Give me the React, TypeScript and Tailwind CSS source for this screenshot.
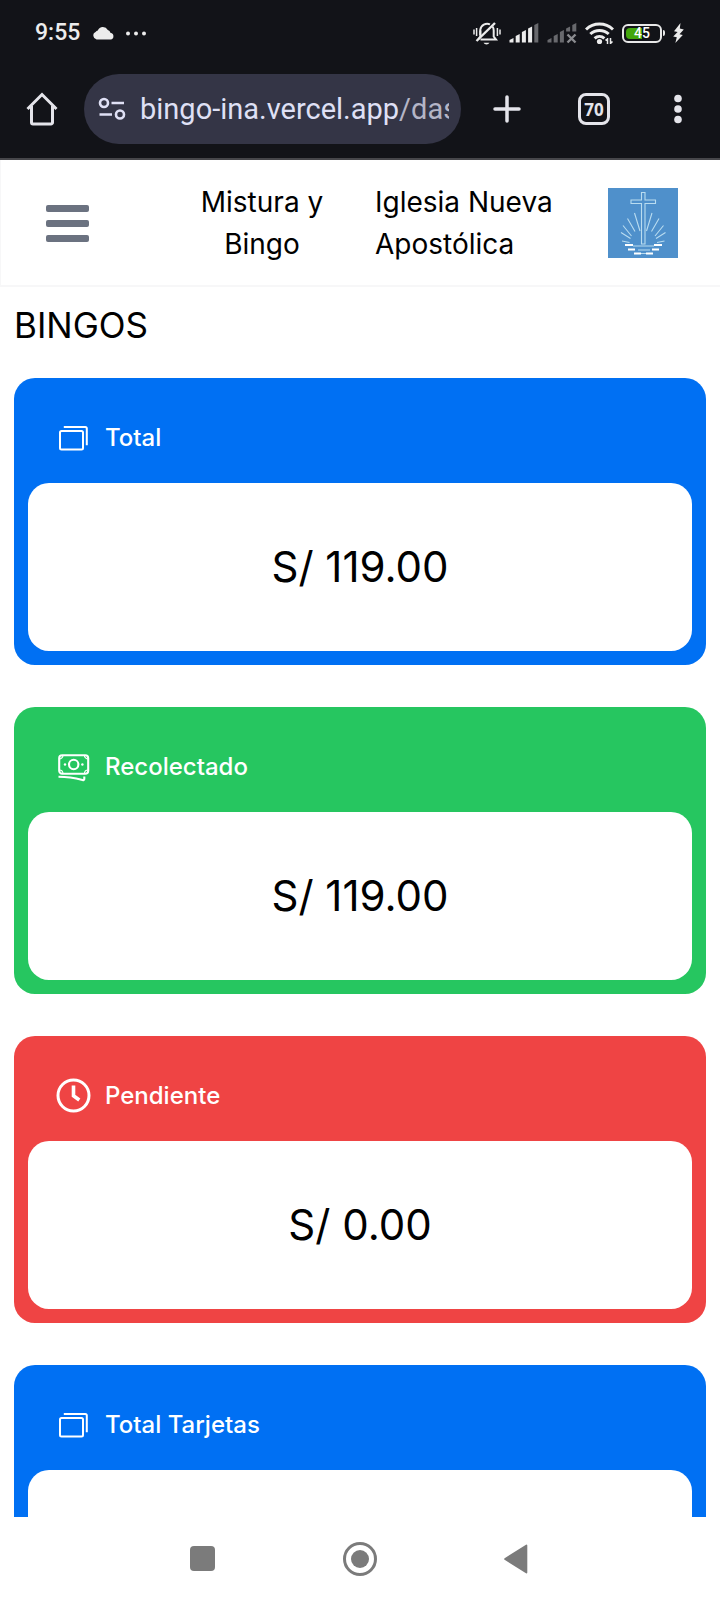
import type { ReactNode } from "react";

function StatusBar() {
  return (
    <div className="flex h-[66px] items-center justify-between pl-[35px] pr-9 text-[#ececec]">
      <div className="flex items-center gap-3">
        <span className="font-['Roboto',sans-serif] text-[23px] leading-8 font-medium">9:55</span>
        <svg width="54" height="16" viewBox="0 0 54 16" fill="currentColor" aria-hidden="true">
          <path d="M4.6 14.4A3.9 3.9 0 0 1 3.6 7a3.6 3.6 0 0 1 2.2-1.6A5.6 5.6 0 0 1 15.8 5a3.6 3.6 0 0 1 2.6 2.8 3.6 3.6 0 0 1 3 3.8c0 1.8-1 2.8-2.2 2.8z" />
          <circle cx="36" cy="8.500" r="2" />
          <circle cx="44" cy="8.500" r="2" />
          <circle cx="52" cy="8.500" r="2" />
        </svg>
      </div>
      <div className="flex items-center gap-2">
        <svg width="28" height="26" viewBox="0 0 28 26" fill="none" stroke="currentColor" strokeWidth="2" aria-hidden="true">
          <path d="M7.500 19.500H23l-2.300-3V10.500c0-1.600-.4-3-1.200-4M17 4.300A7 7 0 0 0 7.300 9.700V15" />
          <path d="M7.300 10.500V16.500L5 19.800" />
          <path d="M3.500 21 22 3" strokeWidth="2.400" />
          <path d="M10.500 22.800a3.400 3.400 0 0 0 6 0z" fill="currentColor" stroke="none" />
          <path d="M1 9.500v5M3.600 8v8M27 9.500v5M24.400 8v8" strokeWidth="1.500" />
        </svg>
        <svg width="30" height="22" viewBox="0 0 30 22" fill="currentColor" aria-hidden="true">
          <path d="M.5 20.500v-2.500l4-2v4.500zM6.700 20.500v-6.500l4-2v8.500zM12.900 20.500v-10.500l4-2v12.500zM19.100 20.500v-14l4-2v16z" />
          <path d="M25.300 20.500v-17.500l4-2v19.500z" fill="#68696d" />
        </svg>
        <svg width="30" height="22" viewBox="0 0 30 22" fill="#68696d" aria-hidden="true">
          <path d="M.5 20.500v-2.500l4-2v4.500zM6.700 20.500v-6.500l4-2v8.500zM12.900 20.500v-10.500l4-2v12.500zM19.100 9.500v-3l4-2v5zM25.300 9.500v-6.500l4-2v8.500z" />
          <path d="m20.500 12.500 8 8M28.500 12.500l-8 8" stroke="#8a8b8f" strokeWidth="2.400" />
        </svg>
        <svg width="29" height="24" viewBox="0 0 29 24" fill="none" stroke="currentColor" strokeWidth="3" aria-hidden="true">
          <path d="M1 8.500a19.500 19.500 0 0 1 27 0" />
          <path d="M5.300 13a13.500 13.500 0 0 1 18.400 0" />
          <path d="M9.600 17.300a7.400 7.400 0 0 1 9.800 0" />
          <circle cx="14.500" cy="20.500" r="2.600" fill="currentColor" stroke="none" />
          <path d="M22.500 23v-6M20.500 19.500l2-2M25.500 17v6M27.500 20.500l-2 2" strokeWidth="1.500" />
        </svg>
        <div className="flex items-center gap-px">
          <div className="relative flex h-[19px] w-10 items-center justify-center overflow-hidden rounded-md border-2 border-[#e8e8e8]">
            <div className="absolute inset-y-0.5 left-0.5 w-4 rounded-l-sm bg-[#43a60c]" />
            <span className="relative font-['Roboto',sans-serif] text-sm leading-none font-medium text-white">45</span>
          </div>
          <div className="h-1.5 w-0.5 rounded-r-sm bg-[#e8e8e8]" />
        </div>
        <svg width="11" height="20" viewBox="0 0 11 20" fill="currentColor" aria-hidden="true">
          <path d="M7.500 0 1 8.200l3.600.8L.2 13.600l3.600.6L2.300 20 9.800 12l-3.300-.8L10.800 6.400l-4-.8z" />
        </svg>
      </div>
    </div>
  );
}

function BrowserBar() {
  return (
    <div className="flex items-center pt-2 pb-3.5 text-[#e4e4ea]">
      <button type="button" aria-label="Inicio" className="flex w-[84px] shrink-0 justify-center">
        <svg width="32" height="34" viewBox="0 0 32 34" fill="none" stroke="currentColor" strokeWidth="3" strokeLinejoin="round" aria-hidden="true">
          <path d="M1.500 17 16 2.500 30.500 17" strokeLinejoin="miter" />
          <path d="M5.500 14v16.500a1.500 1.500 0 0 0 1.500 1.500h18a1.500 1.500 0 0 0 1.500-1.500V14" />
        </svg>
      </button>
      <div className="flex h-[70px] min-w-0 flex-1 items-center gap-3.5 rounded-full bg-[#343546] pr-3 pl-3.5">
        <svg width="28" height="24" viewBox="0 0 28 24" fill="none" stroke="#dfe0f5" strokeWidth="2.600" className="shrink-0" aria-hidden="true">
          <circle cx="6" cy="6" r="4" />
          <path d="M13.500 6H26M1.500 17.500H14" />
          <circle cx="22" cy="17.500" r="4" />
        </svg>
        <div className="min-w-0 flex-1 overflow-hidden font-['Roboto',sans-serif] text-[29px] leading-10 whitespace-nowrap text-[#dfe0f5]">
          bingo-ina.vercel.app<span className="text-[#b4b5c6]">/das</span>
        </div>
      </div>
      <button type="button" aria-label="Nueva pestaña" className="flex w-[92px] shrink-0 justify-center">
        <svg width="28" height="28" viewBox="0 0 28 28" stroke="currentColor" strokeWidth="3.500" strokeLinecap="round" aria-hidden="true">
          <path d="M14 2v24M2 14h24" />
        </svg>
      </button>
      <button type="button" aria-label="Pestañas abiertas" className="flex w-[82px] shrink-0 justify-center">
        <span className="flex size-8 items-center justify-center rounded-lg border-3 border-current font-['Open_Sans',sans-serif] text-[17px] leading-none font-bold">
          70
        </span>
      </button>
      <button type="button" aria-label="Más opciones" className="flex w-[85px] shrink-0 justify-center">
        <svg width="8" height="30" viewBox="0 0 8 30" fill="currentColor" aria-hidden="true">
          <circle cx="4" cy="4.500" r="3.800" />
          <circle cx="4" cy="15" r="3.800" />
          <circle cx="4" cy="25.500" r="3.800" />
        </svg>
      </button>
    </div>
  );
}

function ChurchLogo() {
  return (
    <svg width="70" height="70" viewBox="0 0 70 70" className="shrink-0" role="img" aria-label="Iglesia Nueva Apostólica">
      <rect width="70" height="70" fill="#4f90cb" />
      <g fill="none" stroke="#b9dcf0" strokeWidth="1.100">
        <path d="M33.500 4.500h3.500v7.500h10.500v3.500H37v40.500h-3.500V15.500H23v-3.500h10.500z" />
        <path d="M26.500 25 32 43M19.500 30.500l7.500 13M15 37.500 23.500 48M13 44.500l9.500 6M14 53l7.500 1.500M44 25 38.500 43M51 30.500 43.500 43.500M55.500 37.500 47 48M57.500 44.500l-9.500 6M56.500 53l-7.500 1.500" />
        <path d="M25 58h21M30 62h12M31 65.500h9" strokeWidth="1" />
      </g>
      <path d="M17 57h8M46 57h8M20 61.500h7M44 61.500h7M26 65.500h7M38 65.500h7" stroke="#fff" strokeWidth="1.800" />
    </svg>
  );
}

function SiteHeader() {
  return (
    <header className="flex items-center border-b-2 border-l border-[#f7f7f8] bg-white pt-[21px] pb-5 pr-[42px] pl-[45px] text-[28px] leading-[42px]">
      <button type="button" aria-label="Abrir menú" className="flex w-[43px] shrink-0 flex-col gap-2">
        <span className="h-[7px] rounded-xs bg-[#6b7280]" />
        <span className="h-[7px] rounded-xs bg-[#6b7280]" />
        <span className="h-[7px] rounded-xs bg-[#6b7280]" />
      </button>
      <div className="flex flex-1 justify-end gap-[46px] pr-[45px]">
        <p className="w-[134px] text-center">Mistura y Bingo</p>
        <p className="w-[188px]">Iglesia Nueva Apostólica</p>
      </div>
      <ChurchLogo />
    </header>
  );
}

function CardsIcon() {
  return (
    <svg width="35" height="35" viewBox="0 0 35 35" fill="none" stroke="currentColor" strokeWidth="2" aria-hidden="true">
      <rect x="4" y="11" width="23" height="18.500" rx="1.500" />
      <path d="M7.800 6.900H29.300a1.500 1.500 0 0 1 1.500 1.500V25.200" />
    </svg>
  );
}

function MoneyIcon() {
  return (
    <svg width="35" height="35" viewBox="0 0 35 35" fill="none" stroke="currentColor" strokeWidth="2.100" aria-hidden="true">
      <rect x="3.200" y="6.200" width="29" height="18.500" rx="3" />
      <circle cx="17.700" cy="15.500" r="4.700" />
      <path d="M3.200 10A3.800 3.800 0 0 0 7 6.200M32.200 10a3.800 3.800 0 0 1-3.800-3.800M3.200 21A3.800 3.800 0 0 1 7 24.700M32.200 21a3.800 3.800 0 0 0-3.800 3.700" strokeWidth="1.200" />
      <path d="M2.500 27.800C10 27.800 17 28.600 26.500 31.100a1.400 1.400 0 0 0 1.800-1.400V27.500" />
      <circle cx="9" cy="15.500" r="1.200" fill="currentColor" stroke="none" />
      <circle cx="26.400" cy="15.500" r="1.200" fill="currentColor" stroke="none" />
    </svg>
  );
}

function ClockIcon() {
  return (
    <svg width="35" height="35" viewBox="0 0 35 35" fill="none" stroke="currentColor" strokeWidth="3" aria-hidden="true">
      <circle cx="17.500" cy="17.500" r="15.500" />
      <path d="M17.500 7.500V17.800L23.300 22" strokeWidth="3.600" />
    </svg>
  );
}

type Tone = "blue" | "green" | "red";

const tones: Record<Tone, string> = {
  blue: "bg-[#0070f3]",
  green: "bg-[#26c660]",
  red: "bg-[#ef4444]",
};

function StatCard({ title, value, tone, icon }: { title: string; value?: string; tone: Tone; icon: ReactNode }) {
  return (
    <section className={`rounded-[21px] px-3.5 pb-3.5 ${tones[tone]}`}>
      <div className="flex items-center gap-3.5 px-7 pt-[42px] pb-7 text-white">
        {icon}
        <h2 className="text-2xl leading-[35px] font-medium">{title}</h2>
      </div>
      <div className="flex min-h-[168px] items-center justify-center rounded-[21px] bg-white text-[42px] leading-[56px]">
        {value}
      </div>
    </section>
  );
}

function NavigationBar() {
  return (
    <nav className="flex h-[83px] shrink-0 items-center justify-center gap-[124px] bg-white text-[#7b7b7b]">
      <button type="button" aria-label="Recientes" className="flex w-[34px] justify-center">
        <span className="size-[25px] rounded-[4px] bg-current" />
      </button>
      <button type="button" aria-label="Pantalla de inicio" className="flex size-[34px] items-center justify-center rounded-full border-3 border-current">
        <span className="size-[18px] rounded-full bg-current" />
      </button>
      <button type="button" aria-label="Atrás" className="flex w-[34px] justify-center pr-1">
        <svg width="24" height="30" viewBox="0 0 24 30" fill="currentColor" aria-hidden="true">
          <path d="M.6 14.200 22 .8a.8.8 0 0 1 1.300.7v27a.8.8 0 0 1-1.300.7L.6 15.800a1 1 0 0 1 0-1.600z" />
        </svg>
      </button>
    </nav>
  );
}

export default function App() {
  return (
    <div className="flex h-screen flex-col bg-white font-['Inter',sans-serif] text-black [font-optical-sizing:none]">
      <div className="shrink-0 border-b-2 border-[#46464a] bg-[#121318]">
        <StatusBar />
        <BrowserBar />
      </div>
      <div className="min-h-0 flex-1 overflow-y-auto [scrollbar-width:none]">
        <SiteHeader />
        <main className="px-3.5 pt-3.5">
          <h1 className="text-[35px] leading-[49px]">BINGOS</h1>
          <div className="mt-7 flex flex-col gap-[42px] pb-7">
            <StatCard title="Total" value="S/ 119.00" tone="blue" icon={<CardsIcon />} />
            <StatCard title="Recolectado" value="S/ 119.00" tone="green" icon={<MoneyIcon />} />
            <StatCard title="Pendiente" value="S/ 0.00" tone="red" icon={<ClockIcon />} />
            <StatCard title="Total Tarjetas" tone="blue" icon={<CardsIcon />} />
          </div>
        </main>
      </div>
      <NavigationBar />
    </div>
  );
}
